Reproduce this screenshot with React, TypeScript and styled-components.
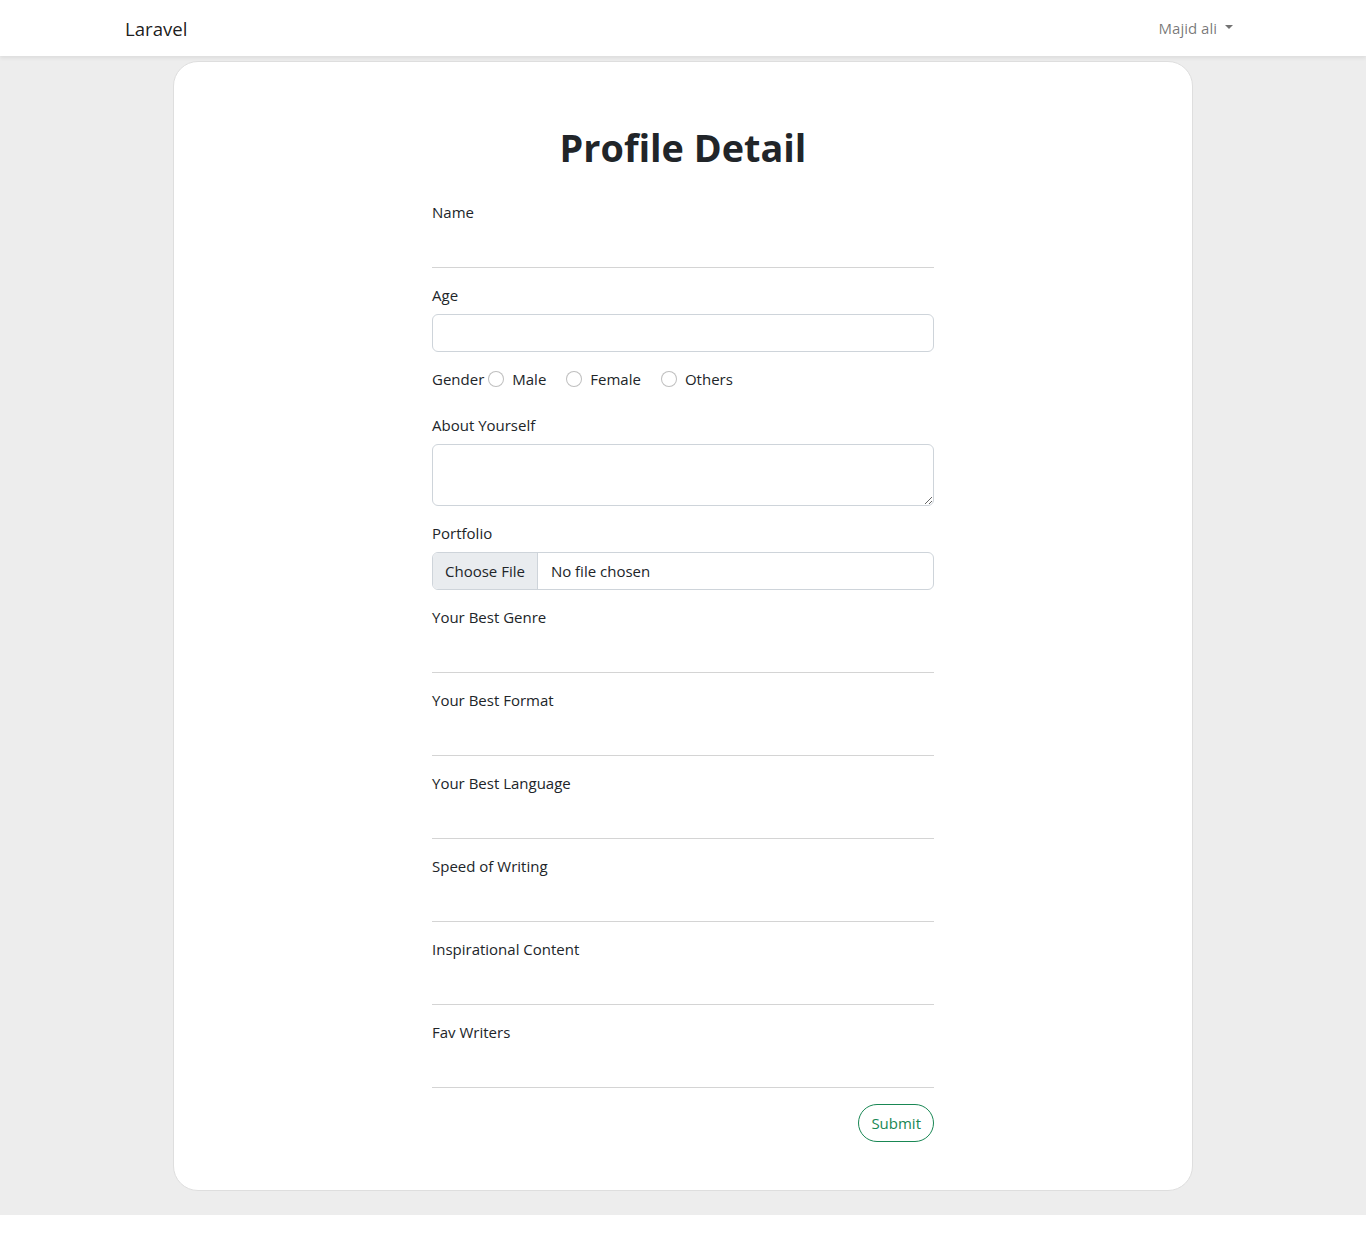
import React from "react";
import styled, { createGlobalStyle } from "styled-components";

const GlobalStyle = createGlobalStyle`
  * { box-sizing: border-box; }
  body {
    margin: 0;
    background: #fff;
    font-family: "Open Sans", "Noto Sans", "Liberation Sans", sans-serif;
    font-size: 15px;
    line-height: 24px;
    color: #212529;
  }
`;

const Navbar = styled.nav`
  height: 56px;
  background: #fff;
  box-shadow: 0 2px 4px rgba(0, 0, 0, 0.075);
  position: relative;
  z-index: 1;
`;

const NavContainer = styled.div`
  max-width: 1140px;
  height: 100%;
  margin: 0 auto;
  padding: 0 12px;
  display: flex;
  align-items: center;
  justify-content: space-between;
`;

const Brand = styled.a`
  font-size: 18.6px;
  line-height: 30px;
  color: rgba(0, 0, 0, 0.9);
  text-decoration: none;
  padding-top: 2px;
`;

const UserToggle = styled.a`
  color: rgba(0, 0, 0, 0.55);
  text-decoration: none;
  padding: 8px;
  display: flex;
  align-items: center;
  &::after {
    content: "";
    display: inline-block;
    margin-left: 8px;
    border-top: 4.8px solid;
    border-left: 4.8px solid transparent;
    border-right: 4.8px solid transparent;
    border-bottom: 0;
    margin-top: -2px;
  }
`;

const Main = styled.main`
  background: #ededed;
  padding: 5px 0 24px;
`;

const Card = styled.div`
  width: 1020px;
  margin: 0 auto;
  background: #fff;
  border: 1px solid #dedede;
  border-radius: 25px;
  padding: 62px 0 48px;
`;

const Title = styled.h1`
  margin: 0 0 28px;
  text-align: center;
  font-size: 37.8px;
  line-height: 48px;
  font-weight: 700;
  color: #212529;
`;

const Form = styled.form`
  width: 502px;
  margin: 0 auto;
  display: flex;
  flex-direction: column;
`;

const Field = styled.div<{ $mb?: number }>`
  margin-bottom: ${(p) => p.$mb ?? 15}px;
`;

const Label = styled.label`
  display: block;
  margin-bottom: 7px;
  line-height: 24px;
`;

const LineInput = styled.input`
  display: block;
  width: 100%;
  height: 37px;
  border: 0;
  border-bottom: 1px solid #d4d4d4;
  background: transparent;
  outline: none;
  font: inherit;
  padding: 6px 0;
`;

const BoxInput = styled.input`
  display: block;
  width: 100%;
  height: 38px;
  border: 1px solid #ced4da;
  border-radius: 6px;
  padding: 6px 12px;
  font: inherit;
  outline: none;
`;

const TextArea = styled.textarea`
  display: block;
  width: 100%;
  height: 62px;
  border: 1px solid #ced4da;
  border-radius: 6px;
  padding: 6px 12px;
  font: inherit;
  resize: vertical;
  outline: none;
`;

const GenderRow = styled.div`
  display: flex;
  align-items: center;
  line-height: 24px;
  margin-bottom: 22px;
`;

const GenderCaption = styled.span`
  margin-right: 4px;
`;

const RadioOption = styled.label`
  display: flex;
  align-items: center;
  margin-right: 20px;
`;

const Radio = styled.input`
  appearance: none;
  width: 16px;
  height: 16px;
  margin: 0 8px 0 0;
  border: 1px solid rgba(0, 0, 0, 0.25);
  border-radius: 50%;
  background: #fff;
`;

const FileBox = styled.label`
  display: flex;
  height: 38px;
  border: 1px solid #ced4da;
  border-radius: 6px;
  overflow: hidden;
  align-items: stretch;
`;

const FileButton = styled.span`
  display: flex;
  align-items: center;
  padding: 0 12px;
  background: #e9ecef;
  border-right: 1px solid #ced4da;
  color: #212529;
`;

const FileName = styled.span`
  display: flex;
  align-items: center;
  padding: 0 13px;
`;

const Actions = styled.div`
  display: flex;
  justify-content: flex-end;
  margin-top: 1px;
`;

const SubmitButton = styled.button`
  height: 38px;
  padding: 0 12px;
  border: 1px solid #198754;
  border-radius: 50rem;
  background: #fff;
  color: #198754;
  font: inherit;
  cursor: pointer;
`;

const lineFields = [
  "Your Best Genre",
  "Your Best Format",
  "Your Best Language",
  "Speed of Writing",
  "Inspirational Content",
  "Fav Writers",
];

export default function App() {
  return (
    <>
      <GlobalStyle />
      <Navbar>
        <NavContainer>
          <Brand href="#">Laravel</Brand>
          <UserToggle href="#">Majid ali</UserToggle>
        </NavContainer>
      </Navbar>
      <Main>
        <Card>
          <Title>Profile Detail</Title>
          <Form onSubmit={(e) => e.preventDefault()}>
            <Field>
              <Label>Name</Label>
              <LineInput type="text" />
            </Field>
            <Field>
              <Label>Age</Label>
              <BoxInput type="number" />
            </Field>
            <GenderRow>
              <GenderCaption>Gender</GenderCaption>
              <RadioOption>
                <Radio type="radio" name="gender" />
                Male
              </RadioOption>
              <RadioOption>
                <Radio type="radio" name="gender" />
                Female
              </RadioOption>
              <RadioOption>
                <Radio type="radio" name="gender" />
                Others
              </RadioOption>
            </GenderRow>
            <Field>
              <Label>About Yourself</Label>
              <TextArea />
            </Field>
            <Field>
              <Label>Portfolio</Label>
              <FileBox>
                <FileButton>Choose File</FileButton>
                <FileName>No file chosen</FileName>
              </FileBox>
            </Field>
            {lineFields.map((f) => (
              <Field key={f}>
                <Label>{f}</Label>
                <LineInput type="text" />
              </Field>
            ))}
            <Actions>
              <SubmitButton type="submit">Submit</SubmitButton>
            </Actions>
          </Form>
        </Card>
      </Main>
    </>
  );
}
